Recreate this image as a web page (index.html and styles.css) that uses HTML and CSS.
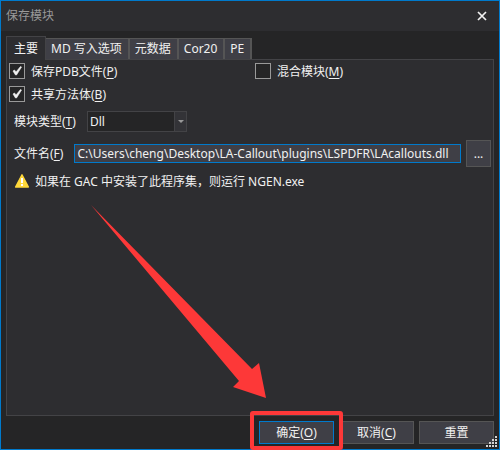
FILE: index.html
```html
<!DOCTYPE html>
<html lang="zh-CN">
<head>
<meta charset="utf-8">
<title>保存模块</title>
<link rel="stylesheet" href="styles.css">
</head>
<body>
<main class="dialog">
  <header class="titlebar">
    <h1 class="title">保存模块</h1>
    <button class="close" type="button" aria-label="关闭">
      <svg width="10" height="10" viewBox="0 0 10 10"><path d="M1 1l8 8M9 1L1 9" fill="none" stroke="#f1f1f1" stroke-width="1.7"/></svg>
    </button>
  </header>
  <div class="content">
    <div class="tabs" role="tablist">
      <button class="tab active" type="button" role="tab" aria-selected="true">主要</button>
      <button class="tab" type="button" role="tab">MD 写入选项</button>
      <button class="tab" type="button" role="tab">元数据</button>
      <button class="tab" type="button" role="tab">Cor20</button>
      <button class="tab" type="button" role="tab">PE</button>
    </div>
    <section class="panel" role="tabpanel">
      <div class="checks">
        <label class="check"><input type="checkbox" checked><span>保存PDB文件(<u>P</u>)</span></label>
        <label class="check"><input type="checkbox"><span>混合模块(<u>M</u>)</span></label>
        <label class="check"><input type="checkbox" checked><span>共享方法体(<u>B</u>)</span></label>
      </div>
      <div class="row type-row">
        <label for="type">模块类型(<u>T</u>)</label>
        <div class="combo">
          <select id="type"><option>Dll</option></select>
        </div>
      </div>
      <div class="row file-row">
        <label for="file">文件名(<u>F</u>)</label>
        <input id="file" class="path" type="text" value="C:\Users\cheng\Desktop\LA-Callout\plugins\LSPDFR\LAcallouts.dll">
        <button class="button browse" type="button" aria-label="浏览">...</button>
      </div>
      <p class="notice">
        <svg width="16" height="16" viewBox="0 0 16 16"><path d="M8 .8L14.4 13H1.6z" fill="#ffd83b" stroke="#ffd83b" stroke-width="1.4" stroke-linejoin="round"/><path d="M7 4h2v5H7zM7 10h2v2H7z" fill="#fff"/></svg>
        <span>如果在 GAC 中安装了此程序集，则运行 NGEN.exe</span>
      </p>
    </section>
  </div>
  <footer class="actions">
    <span class="marked"><button class="button primary" type="button">确定(<u>O</u>)</button></span>
    <button class="button" type="button">取消(<u>C</u>)</button>
    <button class="button" type="button">重置</button>
  </footer>
  <svg class="grip" width="12" height="12" viewBox="0 0 12 12"><path d="M9 0h2v2H9zM6 3h2v2H6zM9 3h2v2H9zM3 6h2v2H3zM6 6h2v2H6zM9 6h2v2H9zM0 9h2v2H0zM3 9h2v2H3zM6 9h2v2H6zM9 9h2v2H9z" fill="#d4d4d4"/></svg>
  <svg class="arrow" width="176" height="194" viewBox="0 0 176 194"><path d="M0 0L161 164L168 158L175 193L142 182L148 176z" fill="#fd3838"/></svg>
</main>
</body>
</html>
```
FILE: styles.css
```css
* { box-sizing: border-box; }

body {
  margin: 0;
  background: #252526;
  color: #f1f1f1;
  font: 12px/16px "Noto Sans", "Noto Sans CJK SC", sans-serif;
}

button, input, select { font: inherit; color: inherit; margin: 0; }

u { text-underline-offset: 2px; }

.dialog {
  position: relative;
  display: flex;
  flex-direction: column;
  min-height: 100vh;
  border: 1px solid #007acc;
}

.titlebar {
  display: flex;
  align-items: center;
  justify-content: space-between;
  height: 30px;
  padding: 0 12px 0 5px;
  background: #2d2d30;
}

.title { margin: 0; font-size: 12px; font-weight: 400; color: #999; }

.close { display: flex; padding: 0; border: 0; background: none; }

.content {
  flex: 1;
  display: flex;
  flex-direction: column;
  padding: 5px 5px 0;
}

.tabs { display: flex; align-items: flex-end; }

.tab {
  height: 21px;
  padding: 0 6px 0 5px;
  border: 1px solid #555;
  border-width: 1px 2px 0 0;
  background: #3f3f46;
  white-space: nowrap;
}

.tab.active {
  position: relative;
  height: 24px;
  margin-bottom: -1px;
  padding: 0 7px;
  border: 1px solid #434346;
  border-bottom: 0;
  background: #2d2d30;
}

.panel {
  flex: 1;
  padding: 3px 2px;
  border: 1px solid #434346;
  background: #2d2d30;
}

.checks {
  display: grid;
  grid-template-columns: 1fr 1fr;
  column-gap: 10px;
  row-gap: 6px;
}

.check { display: flex; align-items: flex-start; gap: 6px; }

.check span { padding-top: 1px; }

.check input {
  appearance: none;
  width: 16px;
  height: 16px;
  border: 1px solid #999;
  background: #252526;
}

.check input:checked {
  background: #252526 url("data:image/svg+xml,%3Csvg xmlns='http://www.w3.org/2000/svg' viewBox='0 0 14 14'%3E%3Cpath d='M3 7l1.5-1L6 8l4.5-5.500 1 .5L6.500 11h-1z' fill='%23f1f1f1' stroke='%23f1f1f1' stroke-width='.6'/%3E%3C/svg%3E");
}

.row { display: flex; align-items: center; padding-left: 5px; }

.type-row { gap: 11px; margin-top: 8px; }

.combo { position: relative; width: 100px; }

.combo::after {
  content: "";
  position: absolute;
  top: 9px;
  right: 3px;
  border: 3px solid transparent;
  border-top-color: #999;
  pointer-events: none;
}

.combo select {
  display: block;
  appearance: none;
  width: 100%;
  height: 21px;
  padding: 0 2px;
  border: 1px solid #434346;
  border-radius: 0;
  background: linear-gradient(to left, #333337 11px, #434346 11px, #434346 12px, #252526 12px);
}

.file-row { gap: 5px; margin-top: 8px; }

.file-row label { margin-right: 6px; }

.path {
  flex: 1;
  min-width: 0;
  height: 19px;
  padding: 0 2px;
  border: 1px solid #007acc;
  outline: 0;
  background: #3f3f46;
}

.button {
  width: 75px;
  height: 23px;
  padding: 0;
  border: 1px solid #555;
  background: #3f3f46;
}

.browse { width: 25px; height: 27px; }

.notice {
  display: flex;
  align-items: center;
  gap: 5px;
  margin: 7px 0 0;
  padding-left: 5px;
}

.actions {
  display: flex;
  justify-content: flex-end;
  gap: 5px;
  padding: 5px;
}

.primary { border-color: #007acc; }

.marked { position: relative; }

.marked::after {
  content: "";
  position: absolute;
  inset: -10px -9px -6px;
  border: 4px solid #fd3838;
  border-radius: 3px;
  pointer-events: none;
}

.grip { position: absolute; right: 1px; bottom: 1px; }

.arrow { position: absolute; left: 90px; top: 204px; pointer-events: none; }
```
